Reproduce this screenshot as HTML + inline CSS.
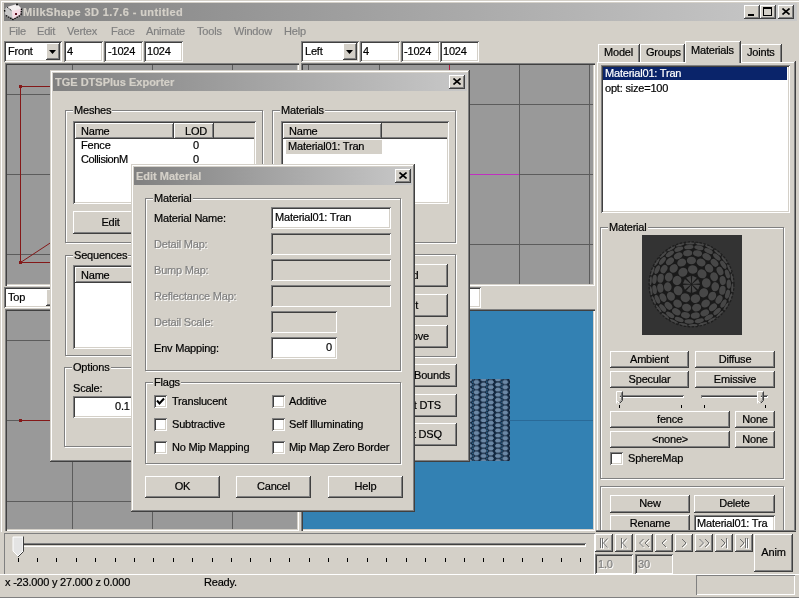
<!DOCTYPE html>
<html><head><meta charset="utf-8">
<style>
*{margin:0;padding:0;box-sizing:border-box}
html,body{width:799px;height:598px;overflow:hidden}
body{position:relative;will-change:transform;background:#D4D0C8;font-family:"Liberation Sans",sans-serif;font-size:11px;color:#000;letter-spacing:-0.2px;-webkit-text-stroke:0.2px}
div,span{position:absolute}
.t{white-space:nowrap;line-height:13px}
.btn{background:#D4D0C8;box-shadow:inset -1px -1px #404040,inset 1px 1px #fff,inset -2px -2px #808080;text-align:center;white-space:nowrap}
.sunk{background:#fff;box-shadow:inset 1px 1px #808080,inset -1px -1px #fff,inset 2px 2px #404040,inset -2px -2px #D4D0C8}
.sunkg{background:#D4D0C8;box-shadow:inset 1px 1px #808080,inset -1px -1px #fff,inset 2px 2px #404040,inset -2px -2px #D4D0C8}
.win{background:#D4D0C8;box-shadow:inset -1px -1px #404040,inset 1px 1px #D4D0C8,inset -2px -2px #808080,inset 2px 2px #fff}
.title{height:18px;background:linear-gradient(to right,#808080,#C8C8C8);color:#D4D0C8;font-weight:bold;font-size:11px;line-height:18px;padding-left:2px;white-space:nowrap;letter-spacing:0}
.grp{border:1px solid #808080;box-shadow:1px 1px #fff,inset 1px 1px #fff}
.grp>span{top:-7px;left:7px;background:#D4D0C8;padding:0 1px;line-height:13px;white-space:nowrap}
.vpo{box-shadow:inset 1px 1px #808080,inset 2px 2px #404040,inset -1px -1px #fff,inset -2px -2px #D4D0C8}
.vp{background:#999999;overflow:hidden}
.gl{background:#5c5c5c}
.dis{color:#808080;text-shadow:1px 1px #fff}
.cb{width:13px;height:13px;background:#fff;box-shadow:inset 1px 1px #808080,inset -1px -1px #fff,inset 2px 2px #404040,inset -2px -2px #D4D0C8}
</style></head><body>

<div style="left:0;top:0;width:799px;height:598px;box-shadow:inset 1px 1px #D4D0C8,inset 2px 2px #fff"></div>
<!-- main title -->
<div class="title" style="left:4px;top:3px;width:793px;padding-left:19px;letter-spacing:0.4px">MilkShape 3D 1.7.6 - untitled</div>
<svg style="position:absolute;left:2px;top:2px" width="22" height="20" viewBox="2 2 22 20">
<path d="M7 7 L17 4 L21.5 8.5 L21 15 L13 19.5 L6 15.5 L4.5 10 Z" fill="#f4f0f0"/>
<path d="M4.5 10 L7 7 L12 11 L13 19.5 L6 15.5 Z" fill="#c8c8c8"/>
<path d="M12 11 L21.5 8.5 L21 15 L13 19.5 Z" fill="#f4dce4"/>
<path d="M6 15.5 L13 19.5 L21 15 M21.5 8.5 L21 15 M4.5 10 L5 12" stroke="#000" stroke-width="1.3" fill="none" stroke-dasharray="1.6 0.8"/>
<path d="M7 7 L12 11" stroke="#202020" stroke-width="1" fill="none" stroke-dasharray="1.2 0.8"/>
<circle cx="17" cy="4.5" r="1" fill="#000"/>
<rect x="15" y="13" width="2" height="2" fill="#601020"/>
</svg>
<div class="btn" style="left:744px;top:5px;width:16px;height:14px"><div style="left:4px;top:9px;width:6px;height:2px;background:#000"></div></div>
<div class="btn" style="left:760px;top:5px;width:16px;height:14px"><div style="left:3px;top:2px;width:9px;height:9px;border:1px solid #000;border-top-width:2px"></div></div>
<div class="btn" style="left:778px;top:5px;width:16px;height:14px"><svg style="position:absolute;left:4px;top:3px" width="8" height="7"><path d="M0.5 0.5 L7.5 6.5 M7.5 0.5 L0.5 6.5" stroke="#000" stroke-width="1.6"/></svg></div>

<!-- menu -->
<div class="t" style="left:9px;top:25px;color:#808080">File</div>
<div class="t" style="left:37px;top:25px;color:#808080">Edit</div>
<div class="t" style="left:67px;top:25px;color:#808080">Vertex</div>
<div class="t" style="left:111px;top:25px;color:#808080">Face</div>
<div class="t" style="left:146px;top:25px;color:#808080">Animate</div>
<div class="t" style="left:197px;top:25px;color:#808080">Tools</div>
<div class="t" style="left:234px;top:25px;color:#808080">Window</div>
<div class="t" style="left:284px;top:25px;color:#808080">Help</div>

<!-- toolbar left -->
<div class="sunk" style="left:4px;top:41px;width:58px;height:21px"><span class="t" style="left:4px;top:4px">Front</span>
<div class="btn" style="left:42px;top:2px;width:14px;height:17px"><svg style="position:absolute;left:3px;top:7px" width="7" height="4"><path d="M0 0H7L3.5 4Z" fill="#000"/></svg></div></div>
<div class="sunk" style="left:64px;top:41px;width:39px;height:21px"><span class="t" style="left:3px;top:4px">4</span></div>
<div class="sunk" style="left:104px;top:41px;width:39px;height:21px"><span class="t" style="left:4px;top:4px">-1024</span></div>
<div class="sunk" style="left:144px;top:41px;width:39px;height:21px"><span class="t" style="left:3px;top:4px">1024</span></div>

<!-- toolbar right -->
<div class="sunk" style="left:301px;top:41px;width:58px;height:21px"><span class="t" style="left:4px;top:4px">Left</span>
<div class="btn" style="left:42px;top:2px;width:14px;height:17px"><svg style="position:absolute;left:3px;top:7px" width="7" height="4"><path d="M0 0H7L3.5 4Z" fill="#000"/></svg></div></div>
<div class="sunk" style="left:360px;top:41px;width:40px;height:21px"><span class="t" style="left:3px;top:4px">4</span></div>
<div class="sunk" style="left:401px;top:41px;width:39px;height:21px"><span class="t" style="left:3px;top:4px">-1024</span></div>
<div class="sunk" style="left:440px;top:41px;width:39px;height:21px"><span class="t" style="left:3px;top:4px">1024</span></div>

<!-- viewports -->
<div class="vpo" style="left:5px;top:63px;width:294px;height:223px"><div class="vp" style="left:2px;top:2px;width:290px;height:219px">
  <div class="gl" style="left:65px;top:0;width:1px;height:219px"></div>
  <div class="gl" style="left:145px;top:0;width:1px;height:219px"></div>
  <div class="gl" style="left:225px;top:0;width:1px;height:219px"></div>
  <div class="gl" style="left:0;top:29px;width:290px;height:1px"></div>
  <div class="gl" style="left:0;top:109px;width:290px;height:1px"></div>
  <div class="gl" style="left:0;top:189px;width:290px;height:1px"></div>
  <div style="left:13px;top:21px;width:1px;height:176px;background:#841818"></div>
  <div style="left:13px;top:21px;width:120px;height:1px;background:#841818"></div>
  <div style="left:13px;top:197px;width:120px;height:1px;background:#841818"></div>
  <svg style="position:absolute;left:0;top:0" width="290" height="219"><line x1="13.5" y1="197.5" x2="133" y2="119" stroke="#841818" stroke-width="1"/></svg>
  <div style="left:12px;top:20px;width:3px;height:3px;background:#841818"></div>
  <div style="left:12px;top:196px;width:3px;height:3px;background:#841818"></div>
</div></div>
<div class="sunk" style="left:4px;top:287px;width:58px;height:21px"><span class="t" style="left:4px;top:4px">Top</span>
<div class="btn" style="left:42px;top:2px;width:14px;height:17px"></div></div>
<div class="vpo" style="left:5px;top:309px;width:294px;height:222px"><div class="vp" style="left:2px;top:2px;width:290px;height:218px">
  <div class="gl" style="left:65px;top:0;width:1px;height:218px"></div>
  <div class="gl" style="left:145px;top:0;width:1px;height:218px"></div>
  <div class="gl" style="left:225px;top:0;width:1px;height:218px"></div>
  <div class="gl" style="left:0;top:29px;width:290px;height:1px"></div>
  <div class="gl" style="left:0;top:109px;width:290px;height:1px"></div>
  <div class="gl" style="left:0;top:190px;width:290px;height:1px"></div>
  <div style="left:13px;top:109px;width:120px;height:1px;background:#841818"></div>
  <div style="left:12px;top:108px;width:3px;height:3px;background:#841818"></div>
</div></div>
<div class="vpo" style="left:301px;top:63px;width:294px;height:223px"><div class="vp" style="left:2px;top:2px;width:290px;height:219px">
  <div class="gl" style="left:5px;top:0;width:1px;height:219px"></div>
  <div class="gl" style="left:76px;top:0;width:1px;height:219px"></div>
  <div class="gl" style="left:216px;top:0;width:1px;height:219px"></div>
  <div class="gl" style="left:286px;top:0;width:1px;height:219px"></div>
  <div class="gl" style="left:0;top:39px;width:290px;height:1px"></div>
  <div class="gl" style="left:0;top:109px;width:290px;height:1px"></div>
  <div class="gl" style="left:0;top:179px;width:290px;height:1px"></div>
  <div style="left:146px;top:0;width:1px;height:109px;background:#b02040"></div>
  <div style="left:146px;top:109px;width:70px;height:1px;background:#c030c0"></div>
</div></div>
<div class="sunk" style="left:301px;top:287px;width:180px;height:21px"></div>
<div class="vpo" style="left:301px;top:309px;width:294px;height:222px"><div style="left:2px;top:2px;width:290px;height:218px;background:#3381B3;overflow:hidden">
  <div style="left:0;top:109px;width:290px;height:1px;background:#2a6a98"></div>
  <svg style="position:absolute;left:140px;top:68px" width="67" height="82">
  <defs><pattern id="hex" width="14.4" height="5.1" patternUnits="userSpaceOnUse" x="1" y="0.5">
  <g fill="#6b88a6" stroke="#0a1a30" stroke-width="1.05">
  <path d="M-0.4 2.55 L1.6 0 L5.6 0 L7.6 2.55 L5.6 5.1 L1.6 5.1 Z"/>
  <path d="M6.8 0 L8.8 -2.55 L12.8 -2.55 L14.8 0 L12.8 2.55 L8.8 2.55 Z"/>
  <path d="M6.8 5.1 L8.8 2.55 L12.8 2.55 L14.8 5.1 L12.8 7.65 L8.8 7.65 Z"/>
  </g></pattern></defs>
  <rect x="0" y="0" width="69" height="83" fill="url(#hex)"/>
  </svg>
</div></div>

<!-- right panel -->
<div class="win" style="left:596px;top:61px;width:200px;height:472px"></div>
<!-- tabs -->
<div style="left:598px;top:44px;width:41px;height:18px;background:#D4D0C8;border-left:1px solid #fff;border-top:1px solid #fff;box-shadow:inset -1px 0 #808080, 1px 0 #404040"><span class="t" style="left:5px;top:1px">Model</span></div>
<div style="left:640px;top:44px;width:44px;height:18px;background:#D4D0C8;border-left:1px solid #fff;border-top:1px solid #fff;box-shadow:inset -1px 0 #808080, 1px 0 #404040"><span class="t" style="left:5px;top:1px">Groups</span></div>
<div style="left:741px;top:44px;width:40px;height:18px;background:#D4D0C8;border-left:1px solid #fff;border-top:1px solid #fff;box-shadow:inset -1px 0 #808080, 1px 0 #404040"><span class="t" style="left:5px;top:1px">Joints</span></div>
<div style="left:685px;top:41px;width:55px;height:22px;background:#D4D0C8;border-left:1px solid #fff;border-top:1px solid #fff;box-shadow:inset -1px 0 #808080, 1px 0 #404040"><span class="t" style="left:5px;top:2px">Materials</span></div>
<!-- listbox -->
<div class="sunk" style="left:601px;top:65px;width:189px;height:148px">
  <div style="left:2px;top:2px;width:184px;height:13px;background:#0A246A"></div>
  <span class="t" style="left:4px;top:2px;color:#fff">Material01: Tran</span>
  <span class="t" style="left:4px;top:17px">opt: size=100</span>
</div>
<!-- material group -->
<div class="grp" style="left:600px;top:227px;width:184px;height:252px"><span>Material</span></div>
<div style="left:642px;top:235px;width:100px;height:100px;background:#333333">
<svg width="100" height="100" style="position:absolute;left:0;top:0">
<circle cx="49.5" cy="49.3" r="42.5" fill="#1a1a1a"/>
<g fill="#474747">
<polygon points="50.2,49.6 58.0,50.1 56.1,54.7"/><polygon points="49.8,50.0 54.9,55.9 50.3,57.8"/><polygon points="49.2,50.0 48.7,57.8 44.1,55.9"/><polygon points="48.8,49.6 42.9,54.7 41.0,50.1"/><polygon points="48.8,49.0 41.0,48.5 42.9,43.9"/><polygon points="49.2,48.6 44.1,42.7 48.7,40.8"/><polygon points="49.8,48.6 50.3,40.8 54.9,42.7"/><polygon points="50.2,49.0 56.1,43.9 58.0,48.5"/><ellipse cx="61.7" cy="57.8" rx="4.35" ry="4.77" transform="rotate(34.8 61.7 57.8)"/><ellipse cx="53.4" cy="63.6" rx="4.35" ry="4.77" transform="rotate(74.8 53.4 63.6)"/><ellipse cx="43.3" cy="62.8" rx="4.35" ry="4.77" transform="rotate(114.8 43.3 62.8)"/><ellipse cx="36.1" cy="55.6" rx="4.35" ry="4.77" transform="rotate(154.8 36.1 55.6)"/><ellipse cx="35.1" cy="45.5" rx="4.35" ry="4.77" transform="rotate(194.8 35.1 45.5)"/><ellipse cx="40.9" cy="37.2" rx="4.35" ry="4.77" transform="rotate(234.8 40.9 37.2)"/><ellipse cx="50.7" cy="34.5" rx="4.35" ry="4.77" transform="rotate(274.8 50.7 34.5)"/><ellipse cx="60.0" cy="38.8" rx="4.35" ry="4.77" transform="rotate(314.8 60.0 38.8)"/><ellipse cx="64.3" cy="48.0" rx="4.35" ry="4.77" transform="rotate(354.8 64.3 48.0)"/><ellipse cx="70.2" cy="61.1" rx="3.84" ry="4.59" transform="rotate(29.8 70.2 61.1)"/><ellipse cx="63.6" cy="68.5" rx="3.84" ry="4.59" transform="rotate(53.8 63.6 68.5)"/><ellipse cx="54.6" cy="72.6" rx="3.84" ry="4.59" transform="rotate(77.8 54.6 72.6)"/><ellipse cx="44.6" cy="72.6" rx="3.84" ry="4.59" transform="rotate(101.8 44.6 72.6)"/><ellipse cx="35.6" cy="68.6" rx="3.84" ry="4.59" transform="rotate(125.8 35.6 68.6)"/><ellipse cx="28.9" cy="61.3" rx="3.84" ry="4.59" transform="rotate(149.8 28.9 61.3)"/><ellipse cx="25.8" cy="51.9" rx="3.84" ry="4.59" transform="rotate(173.8 25.8 51.9)"/><ellipse cx="26.8" cy="42.0" rx="3.84" ry="4.59" transform="rotate(197.8 26.8 42.0)"/><ellipse cx="31.7" cy="33.4" rx="3.84" ry="4.59" transform="rotate(221.8 31.7 33.4)"/><ellipse cx="39.7" cy="27.6" rx="3.84" ry="4.59" transform="rotate(245.8 39.7 27.6)"/><ellipse cx="49.4" cy="25.5" rx="3.84" ry="4.59" transform="rotate(269.8 49.4 25.5)"/><ellipse cx="59.1" cy="27.5" rx="3.84" ry="4.59" transform="rotate(293.8 59.1 27.5)"/><ellipse cx="67.1" cy="33.3" rx="3.84" ry="4.59" transform="rotate(317.8 67.1 33.3)"/><ellipse cx="72.1" cy="41.8" rx="3.84" ry="4.59" transform="rotate(341.8 72.1 41.8)"/><ellipse cx="73.2" cy="51.7" rx="3.84" ry="4.59" transform="rotate(365.8 73.2 51.7)"/><ellipse cx="80.4" cy="55.3" rx="3.12" ry="4.54" transform="rotate(11.0 80.4 55.3)"/><ellipse cx="77.0" cy="64.5" rx="3.12" ry="4.54" transform="rotate(29.0 77.0 64.5)"/><ellipse cx="71.0" cy="72.3" rx="3.12" ry="4.54" transform="rotate(47.0 71.0 72.3)"/><ellipse cx="62.8" cy="77.8" rx="3.12" ry="4.54" transform="rotate(65.0 62.8 77.8)"/><ellipse cx="53.3" cy="80.5" rx="3.12" ry="4.54" transform="rotate(83.0 53.3 80.5)"/><ellipse cx="43.5" cy="80.2" rx="3.12" ry="4.54" transform="rotate(101.0 43.5 80.2)"/><ellipse cx="34.3" cy="76.8" rx="3.12" ry="4.54" transform="rotate(119.0 34.3 76.8)"/><ellipse cx="26.5" cy="70.8" rx="3.12" ry="4.54" transform="rotate(137.0 26.5 70.8)"/><ellipse cx="21.0" cy="62.6" rx="3.12" ry="4.54" transform="rotate(155.0 21.0 62.6)"/><ellipse cx="18.3" cy="53.1" rx="3.12" ry="4.54" transform="rotate(173.0 18.3 53.1)"/><ellipse cx="18.6" cy="43.3" rx="3.12" ry="4.54" transform="rotate(191.0 18.6 43.3)"/><ellipse cx="22.0" cy="34.1" rx="3.12" ry="4.54" transform="rotate(209.0 22.0 34.1)"/><ellipse cx="28.0" cy="26.3" rx="3.12" ry="4.54" transform="rotate(227.0 28.0 26.3)"/><ellipse cx="36.2" cy="20.8" rx="3.12" ry="4.54" transform="rotate(245.0 36.2 20.8)"/><ellipse cx="45.7" cy="18.1" rx="3.12" ry="4.54" transform="rotate(263.0 45.7 18.1)"/><ellipse cx="55.5" cy="18.4" rx="3.12" ry="4.54" transform="rotate(281.0 55.5 18.4)"/><ellipse cx="64.7" cy="21.8" rx="3.12" ry="4.54" transform="rotate(299.0 64.7 21.8)"/><ellipse cx="72.5" cy="27.8" rx="3.12" ry="4.54" transform="rotate(317.0 72.5 27.8)"/><ellipse cx="78.0" cy="36.0" rx="3.12" ry="4.54" transform="rotate(335.0 78.0 36.0)"/><ellipse cx="80.7" cy="45.5" rx="3.12" ry="4.54" transform="rotate(353.0 80.7 45.5)"/><ellipse cx="85.5" cy="59.2" rx="2.22" ry="4.69" transform="rotate(15.3 85.5 59.2)"/><ellipse cx="81.5" cy="68.5" rx="2.22" ry="4.69" transform="rotate(31.0 81.5 68.5)"/><ellipse cx="75.1" cy="76.4" rx="2.22" ry="4.69" transform="rotate(46.6 75.1 76.4)"/><ellipse cx="66.8" cy="82.3" rx="2.22" ry="4.69" transform="rotate(62.3 66.8 82.3)"/><ellipse cx="57.3" cy="85.8" rx="2.22" ry="4.69" transform="rotate(77.9 57.3 85.8)"/><ellipse cx="47.2" cy="86.5" rx="2.22" ry="4.69" transform="rotate(93.6 47.2 86.5)"/><ellipse cx="37.2" cy="84.5" rx="2.22" ry="4.69" transform="rotate(109.3 37.2 84.5)"/><ellipse cx="28.2" cy="79.9" rx="2.22" ry="4.69" transform="rotate(124.9 28.2 79.9)"/><ellipse cx="20.7" cy="73.0" rx="2.22" ry="4.69" transform="rotate(140.6 20.7 73.0)"/><ellipse cx="15.4" cy="64.3" rx="2.22" ry="4.69" transform="rotate(156.2 15.4 64.3)"/><ellipse cx="12.6" cy="54.6" rx="2.22" ry="4.69" transform="rotate(171.9 12.6 54.6)"/><ellipse cx="12.5" cy="44.4" rx="2.22" ry="4.69" transform="rotate(187.5 12.5 44.4)"/><ellipse cx="15.2" cy="34.6" rx="2.22" ry="4.69" transform="rotate(203.2 15.2 34.6)"/><ellipse cx="20.4" cy="25.9" rx="2.22" ry="4.69" transform="rotate(218.8 20.4 25.9)"/><ellipse cx="27.8" cy="18.9" rx="2.22" ry="4.69" transform="rotate(234.5 27.8 18.9)"/><ellipse cx="36.8" cy="14.2" rx="2.22" ry="4.69" transform="rotate(250.1 36.8 14.2)"/><ellipse cx="46.8" cy="12.1" rx="2.22" ry="4.69" transform="rotate(265.8 46.8 12.1)"/><ellipse cx="56.9" cy="12.7" rx="2.22" ry="4.69" transform="rotate(281.4 56.9 12.7)"/><ellipse cx="66.5" cy="16.1" rx="2.22" ry="4.69" transform="rotate(297.1 66.5 16.1)"/><ellipse cx="74.8" cy="21.9" rx="2.22" ry="4.69" transform="rotate(312.7 74.8 21.9)"/><ellipse cx="81.3" cy="29.7" rx="2.22" ry="4.69" transform="rotate(328.4 81.3 29.7)"/><ellipse cx="85.4" cy="39.0" rx="2.22" ry="4.69" transform="rotate(344.0 85.4 39.0)"/><ellipse cx="86.8" cy="49.1" rx="2.22" ry="4.69" transform="rotate(359.7 86.8 49.1)"/><ellipse cx="88.4" cy="62.5" rx="1.20" ry="4.56" transform="rotate(18.7 88.4 62.5)"/><ellipse cx="84.1" cy="71.4" rx="1.20" ry="4.56" transform="rotate(32.5 84.1 71.4)"/><ellipse cx="77.8" cy="79.0" rx="1.20" ry="4.56" transform="rotate(46.4 77.8 79.0)"/><ellipse cx="69.9" cy="84.9" rx="1.20" ry="4.56" transform="rotate(60.2 69.9 84.9)"/><ellipse cx="60.8" cy="88.8" rx="1.20" ry="4.56" transform="rotate(74.1 60.8 88.8)"/><ellipse cx="51.0" cy="90.3" rx="1.20" ry="4.56" transform="rotate(87.9 51.0 90.3)"/><ellipse cx="41.1" cy="89.5" rx="1.20" ry="4.56" transform="rotate(101.8 41.1 89.5)"/><ellipse cx="31.8" cy="86.3" rx="1.20" ry="4.56" transform="rotate(115.6 31.8 86.3)"/><ellipse cx="23.4" cy="81.0" rx="1.20" ry="4.56" transform="rotate(129.5 23.4 81.0)"/><ellipse cx="16.6" cy="73.8" rx="1.20" ry="4.56" transform="rotate(143.3 16.6 73.8)"/><ellipse cx="11.7" cy="65.2" rx="1.20" ry="4.56" transform="rotate(157.2 11.7 65.2)"/><ellipse cx="9.0" cy="55.7" rx="1.20" ry="4.56" transform="rotate(171.0 9.0 55.7)"/><ellipse cx="8.6" cy="45.8" rx="1.20" ry="4.56" transform="rotate(184.8 8.6 45.8)"/><ellipse cx="10.6" cy="36.1" rx="1.20" ry="4.56" transform="rotate(198.7 10.6 36.1)"/><ellipse cx="14.9" cy="27.2" rx="1.20" ry="4.56" transform="rotate(212.5 14.9 27.2)"/><ellipse cx="21.2" cy="19.6" rx="1.20" ry="4.56" transform="rotate(226.4 21.2 19.6)"/><ellipse cx="29.1" cy="13.7" rx="1.20" ry="4.56" transform="rotate(240.2 29.1 13.7)"/><ellipse cx="38.2" cy="9.8" rx="1.20" ry="4.56" transform="rotate(254.1 38.2 9.8)"/><ellipse cx="48.0" cy="8.3" rx="1.20" ry="4.56" transform="rotate(267.9 48.0 8.3)"/><ellipse cx="57.9" cy="9.1" rx="1.20" ry="4.56" transform="rotate(281.8 57.9 9.1)"/><ellipse cx="67.2" cy="12.3" rx="1.20" ry="4.56" transform="rotate(295.6 67.2 12.3)"/><ellipse cx="75.6" cy="17.6" rx="1.20" ry="4.56" transform="rotate(309.5 75.6 17.6)"/><ellipse cx="82.4" cy="24.8" rx="1.20" ry="4.56" transform="rotate(323.3 82.4 24.8)"/><ellipse cx="87.3" cy="33.4" rx="1.20" ry="4.56" transform="rotate(337.2 87.3 33.4)"/><ellipse cx="90.0" cy="42.9" rx="1.20" ry="4.56" transform="rotate(351.0 90.0 42.9)"/><ellipse cx="90.4" cy="52.8" rx="1.20" ry="4.56" transform="rotate(364.8 90.4 52.8)"/><ellipse cx="91.3" cy="56.6" rx="0.20" ry="4.71" transform="rotate(10.0 91.3 56.6)"/><ellipse cx="88.3" cy="66.4" rx="0.20" ry="4.71" transform="rotate(23.8 88.3 66.4)"/><ellipse cx="83.1" cy="75.2" rx="0.20" ry="4.71" transform="rotate(37.7 83.1 75.2)"/><ellipse cx="75.9" cy="82.5" rx="0.20" ry="4.71" transform="rotate(51.5 75.9 82.5)"/><ellipse cx="67.2" cy="87.8" rx="0.20" ry="4.71" transform="rotate(65.4 67.2 87.8)"/><ellipse cx="57.4" cy="90.9" rx="0.20" ry="4.71" transform="rotate(79.2 57.4 90.9)"/><ellipse cx="47.2" cy="91.6" rx="0.20" ry="4.71" transform="rotate(93.0 47.2 91.6)"/><ellipse cx="37.2" cy="89.9" rx="0.20" ry="4.71" transform="rotate(106.9 37.2 89.9)"/><ellipse cx="27.8" cy="85.7" rx="0.20" ry="4.71" transform="rotate(120.7 27.8 85.7)"/><ellipse cx="19.7" cy="79.5" rx="0.20" ry="4.71" transform="rotate(134.6 19.7 79.5)"/><ellipse cx="13.4" cy="71.5" rx="0.20" ry="4.71" transform="rotate(148.4 13.4 71.5)"/><ellipse cx="9.1" cy="62.2" rx="0.20" ry="4.71" transform="rotate(162.3 9.1 62.2)"/><ellipse cx="7.2" cy="52.2" rx="0.20" ry="4.71" transform="rotate(176.1 7.2 52.2)"/><ellipse cx="7.7" cy="42.0" rx="0.20" ry="4.71" transform="rotate(190.0 7.7 42.0)"/><ellipse cx="10.7" cy="32.2" rx="0.20" ry="4.71" transform="rotate(203.8 10.7 32.2)"/><ellipse cx="15.9" cy="23.4" rx="0.20" ry="4.71" transform="rotate(217.7 15.9 23.4)"/><ellipse cx="23.1" cy="16.1" rx="0.20" ry="4.71" transform="rotate(231.5 23.1 16.1)"/><ellipse cx="31.8" cy="10.8" rx="0.20" ry="4.71" transform="rotate(245.4 31.8 10.8)"/><ellipse cx="41.6" cy="7.7" rx="0.20" ry="4.71" transform="rotate(259.2 41.6 7.7)"/><ellipse cx="51.8" cy="7.0" rx="0.20" ry="4.71" transform="rotate(273.0 51.8 7.0)"/><ellipse cx="61.8" cy="8.7" rx="0.20" ry="4.71" transform="rotate(286.9 61.8 8.7)"/><ellipse cx="71.2" cy="12.9" rx="0.20" ry="4.71" transform="rotate(300.7 71.2 12.9)"/><ellipse cx="79.3" cy="19.1" rx="0.20" ry="4.71" transform="rotate(314.6 79.3 19.1)"/><ellipse cx="85.6" cy="27.1" rx="0.20" ry="4.71" transform="rotate(328.4 85.6 27.1)"/><ellipse cx="89.9" cy="36.4" rx="0.20" ry="4.71" transform="rotate(342.3 89.9 36.4)"/><ellipse cx="91.8" cy="46.4" rx="0.20" ry="4.71" transform="rotate(356.1 91.8 46.4)"/>
</g>
<circle cx="49.5" cy="49.3" r="42.5" fill="none" stroke="#1e1e1e" stroke-width="1.2" stroke-dasharray="2.5 1.5"/>
</svg></div>
<div class="btn" style="left:610px;top:351px;width:79px;height:17px;line-height:16px">Ambient</div>
<div class="btn" style="left:695px;top:351px;width:80px;height:17px;line-height:16px">Diffuse</div>
<div class="btn" style="left:610px;top:371px;width:79px;height:17px;line-height:16px">Specular</div>
<div class="btn" style="left:695px;top:371px;width:80px;height:17px;line-height:16px">Emissive</div>
<!-- sliders -->
<div style="left:617px;top:395px;width:67px;height:3px;box-shadow:inset 1px 1px #808080,inset -1px -1px #fff"></div>
<div style="left:618px;top:396px;width:65px;height:1px;background:#404040"></div>
<svg style="position:absolute;left:616px;top:391px" width="8" height="14"><path d="M0.5 12.5V0.5H6.5" stroke="#fff" fill="#D4D0C8"/><path d="M6.5 0.5V9.5L3.5 12.5" stroke="#404040" fill="none"/><path d="M5.5 1.5V9L3 11.5" stroke="#808080" fill="none"/><path d="M0.5 9.5L3.5 12.5" stroke="#fff" fill="none"/></svg>
<div style="left:619px;top:405px;width:1px;height:3px;background:#000"></div>
<div style="left:681px;top:405px;width:1px;height:3px;background:#000"></div>
<div style="left:701px;top:395px;width:67px;height:3px;box-shadow:inset 1px 1px #808080,inset -1px -1px #fff"></div>
<div style="left:702px;top:396px;width:65px;height:1px;background:#404040"></div>
<svg style="position:absolute;left:757px;top:391px" width="8" height="14"><path d="M0.5 12.5V0.5H6.5" stroke="#fff" fill="#D4D0C8"/><path d="M6.5 0.5V9.5L3.5 12.5" stroke="#404040" fill="none"/><path d="M5.5 1.5V9L3 11.5" stroke="#808080" fill="none"/><path d="M0.5 9.5L3.5 12.5" stroke="#fff" fill="none"/></svg>
<div style="left:704px;top:405px;width:1px;height:3px;background:#000"></div>
<div style="left:765px;top:405px;width:1px;height:3px;background:#000"></div>
<div class="btn" style="left:610px;top:411px;width:120px;height:17px;line-height:16px">fence</div>
<div class="btn" style="left:735px;top:411px;width:40px;height:17px;line-height:16px">None</div>
<div class="btn" style="left:610px;top:431px;width:120px;height:17px;line-height:16px">&lt;none&gt;</div>
<div class="btn" style="left:735px;top:431px;width:40px;height:17px;line-height:16px">None</div>
<div class="cb" style="left:610px;top:452px"></div>
<span class="t" style="left:628px;top:452px">SphereMap</span>
<!-- new/delete group -->
<div class="grp" style="left:600px;top:486px;width:184px;height:50px"></div>
<div class="btn" style="left:610px;top:495px;width:80px;height:18px;line-height:17px">New</div>
<div class="btn" style="left:694px;top:495px;width:81px;height:18px;line-height:17px">Delete</div>
<div class="btn" style="left:610px;top:515px;width:80px;height:18px;line-height:17px">Rename</div>
<div class="sunk" style="left:694px;top:515px;width:81px;height:18px"><span class="t" style="left:3px;top:2px">Material01: Tra</span></div>

<!-- bottom timeline panel -->
<div style="left:596px;top:530px;width:200px;height:45px;background:#D4D0C8;box-shadow:inset 0 1px #808080,inset 0 2px #404040"></div>
<div style="left:796px;top:530px;width:3px;height:45px;background:#D4D0C8"></div>
<div style="left:0;top:532px;width:596px;height:43px;background:#D4D0C8"></div>
<div style="left:4px;top:533px;width:591px;height:42px;box-shadow:inset 1px 1px #808080,inset -1px -1px #fff"></div>
<!-- slider track -->
<div style="left:14px;top:543px;width:572px;height:4px;box-shadow:inset 1px 1px #808080,inset -1px -1px #fff,inset 2px 2px #404040"></div>
<svg style="position:absolute;left:12px;top:536px" width="13" height="22"><path d="M1 1 H11 V15 L6 20 L1 15 Z" fill="#e4e4e4" stroke="#fff"/><path d="M11.5 0.5 V15.5 L6 21" fill="none" stroke="#404040"/></svg>
<svg style="position:absolute;left:0;top:558px" width="599" height="5">
<g stroke="#000" stroke-width="1"><line x1="18.5" y1="0" x2="18.5" y2="4"/><line x1="37.5" y1="0" x2="37.5" y2="4"/><line x1="56.5" y1="0" x2="56.5" y2="4"/><line x1="76.5" y1="0" x2="76.5" y2="4"/><line x1="95.5" y1="0" x2="95.5" y2="4"/><line x1="115.5" y1="0" x2="115.5" y2="4"/><line x1="134.5" y1="0" x2="134.5" y2="4"/><line x1="153.5" y1="0" x2="153.5" y2="4"/><line x1="173.5" y1="0" x2="173.5" y2="4"/><line x1="192.5" y1="0" x2="192.5" y2="4"/><line x1="212.5" y1="0" x2="212.5" y2="4"/><line x1="231.5" y1="0" x2="231.5" y2="4"/><line x1="250.5" y1="0" x2="250.5" y2="4"/><line x1="270.5" y1="0" x2="270.5" y2="4"/><line x1="289.5" y1="0" x2="289.5" y2="4"/><line x1="309.5" y1="0" x2="309.5" y2="4"/><line x1="328.5" y1="0" x2="328.5" y2="4"/><line x1="347.5" y1="0" x2="347.5" y2="4"/><line x1="367.5" y1="0" x2="367.5" y2="4"/><line x1="386.5" y1="0" x2="386.5" y2="4"/><line x1="406.5" y1="0" x2="406.5" y2="4"/><line x1="425.5" y1="0" x2="425.5" y2="4"/><line x1="445.5" y1="0" x2="445.5" y2="4"/><line x1="464.5" y1="0" x2="464.5" y2="4"/><line x1="483.5" y1="0" x2="483.5" y2="4"/><line x1="503.5" y1="0" x2="503.5" y2="4"/><line x1="522.5" y1="0" x2="522.5" y2="4"/><line x1="542.5" y1="0" x2="542.5" y2="4"/><line x1="561.5" y1="0" x2="561.5" y2="4"/><line x1="580.5" y1="0" x2="580.5" y2="4"/></g></svg>
<!-- nav buttons -->
<div class="btn" style="left:595px;top:534px;width:18px;height:18px"><svg style="position:absolute;left:0;top:0" width="18" height="18"><path d="M5.5 4V14M7.5 4V14M12.5 4.5L8.5 9L12.5 13.5" transform="translate(1,1)" stroke="#fff" fill="none"/><path d="M5.5 4V14M7.5 4V14M12.5 4.5L8.5 9L12.5 13.5" stroke="#707070" fill="none"/></svg></div>
<div class="btn" style="left:615px;top:534px;width:18px;height:18px"><svg style="position:absolute;left:0;top:0" width="18" height="18"><path d="M6.5 4V14M11.5 4.5L7.5 9L11.5 13.5" transform="translate(1,1)" stroke="#fff" fill="none"/><path d="M6.5 4V14M11.5 4.5L7.5 9L11.5 13.5" stroke="#707070" fill="none"/></svg></div>
<div class="btn" style="left:635px;top:534px;width:18px;height:18px"><svg style="position:absolute;left:0;top:0" width="18" height="18"><path d="M8.5 5L4.5 9L8.5 13M14 5L10 9L14 13" transform="translate(1,1)" stroke="#fff" fill="none"/><path d="M8.5 5L4.5 9L8.5 13M14 5L10 9L14 13" stroke="#707070" fill="none"/></svg></div>
<div class="btn" style="left:655px;top:534px;width:18px;height:18px"><svg style="position:absolute;left:0;top:0" width="18" height="18"><path d="M11 5L7 9L11 13" transform="translate(1,1)" stroke="#fff" fill="none"/><path d="M11 5L7 9L11 13" stroke="#707070" fill="none"/></svg></div>
<div class="btn" style="left:675px;top:534px;width:18px;height:18px"><svg style="position:absolute;left:0;top:0" width="18" height="18"><path d="M7 5L11 9L7 13" transform="translate(1,1)" stroke="#fff" fill="none"/><path d="M7 5L11 9L7 13" stroke="#707070" fill="none"/></svg></div>
<div class="btn" style="left:695px;top:534px;width:18px;height:18px"><svg style="position:absolute;left:0;top:0" width="18" height="18"><path d="M4.5 5L8.5 9L4.5 13M10 5L14 9L10 13" transform="translate(1,1)" stroke="#fff" fill="none"/><path d="M4.5 5L8.5 9L4.5 13M10 5L14 9L10 13" stroke="#707070" fill="none"/></svg></div>
<div class="btn" style="left:715px;top:534px;width:18px;height:18px"><svg style="position:absolute;left:0;top:0" width="18" height="18"><path d="M6 5L10 9L6 13M11.5 4V14" transform="translate(1,1)" stroke="#fff" fill="none"/><path d="M6 5L10 9L6 13M11.5 4V14" stroke="#707070" fill="none"/></svg></div>
<div class="btn" style="left:735px;top:534px;width:18px;height:18px"><svg style="position:absolute;left:0;top:0" width="18" height="18"><path d="M5 5L9 9L5 13M10.5 4V14M12.5 4V14" transform="translate(1,1)" stroke="#fff" fill="none"/><path d="M5 5L9 9L5 13M10.5 4V14M12.5 4V14" stroke="#707070" fill="none"/></svg></div>
<div class="sunkg" style="left:595px;top:554px;width:38px;height:20px"><span class="t dis" style="left:3px;top:4px">1.0</span></div>
<div class="sunkg" style="left:635px;top:554px;width:38px;height:20px"><span class="t dis" style="left:3px;top:4px">30</span></div>
<div class="btn" style="left:754px;top:534px;width:39px;height:38px;line-height:37px">Anim</div>

<!-- status bar -->
<div style="left:0;top:574px;width:799px;height:24px;border-top:1px solid #fff;background:#D4D0C8"></div>
<span class="t" style="left:5px;top:576px">x -23.000 y 27.000 z 0.000</span>
<span class="t" style="left:204px;top:576px">Ready.</span>
<div style="left:696px;top:575px;width:99px;height:20px;box-shadow:inset 1px 1px #808080,inset -1px -1px #fff"></div>
<div style="left:0;top:597px;width:799px;height:1px;background:#808080"></div>

<!-- ===== Exporter dialog ===== -->
<div class="win" style="left:50px;top:70px;width:420px;height:392px">
  <div class="title" style="left:3px;top:3px;width:414px">TGE DTSPlus Exporter</div>
  <div class="btn" style="left:399px;top:5px;width:16px;height:14px"><svg style="position:absolute;left:4px;top:3px" width="8" height="7"><path d="M0.5 0.5 L7.5 6.5 M7.5 0.5 L0.5 6.5" stroke="#000" stroke-width="1.6"/></svg></div>
  <!-- Meshes -->
  <div class="grp" style="left:15px;top:40px;width:198px;height:133px"><span>Meshes</span></div>
  <div class="sunk" style="left:23px;top:51px;width:183px;height:83px;overflow:hidden">
    <div class="btn" style="left:2px;top:2px;width:99px;height:16px;text-align:left"><span class="t" style="left:6px;top:2px">Name</span></div>
    <div class="btn" style="left:101px;top:2px;width:40px;height:16px"><span class="t" style="left:11px;top:2px">LOD</span></div>
    <div style="left:141px;top:2px;width:40px;height:16px;background:#D4D0C8;box-shadow:inset 0 -1px #404040,inset 0 -2px #808080"></div>
    <span class="t" style="left:8px;top:18px">Fence</span><span class="t" style="left:120px;top:18px">0</span>
    <span class="t" style="left:8px;top:32px;letter-spacing:-0.4px">CollisionM</span><span class="t" style="left:120px;top:32px">0</span>
  </div>
  <div class="btn" style="left:23px;top:141px;width:75px;height:23px;line-height:22px">Edit</div>
  <!-- Materials -->
  <div class="grp" style="left:222px;top:40px;width:184px;height:133px"><span>Materials</span></div>
  <div class="sunk" style="left:231px;top:51px;width:168px;height:83px;overflow:hidden">
    <div class="btn" style="left:2px;top:2px;width:99px;height:16px"><span class="t" style="left:6px;top:2px">Name</span></div>
    <div style="left:101px;top:2px;width:65px;height:16px;background:#D4D0C8;box-shadow:inset 0 -1px #404040,inset 0 -2px #808080"></div>
    <div style="left:5px;top:19px;width:96px;height:14px;background:#D4D0C8"></div>
    <span class="t" style="left:7px;top:19px">Material01: Tran</span>
  </div>
  <!-- Sequences -->
  <div class="grp" style="left:15px;top:185px;width:198px;height:101px"><span>Sequences</span></div>
  <div class="sunk" style="left:23px;top:195px;width:183px;height:84px;overflow:hidden">
    <div class="btn" style="left:2px;top:2px;width:99px;height:16px"><span class="t" style="left:6px;top:2px">Name</span></div>
    <div style="left:101px;top:2px;width:80px;height:16px;background:#D4D0C8;box-shadow:inset 0 -1px #404040,inset 0 -2px #808080"></div>
  </div>
  <div class="grp" style="left:222px;top:184px;width:184px;height:103px"></div>
  <div class="btn" style="left:320px;top:194px;width:78px;height:23px;line-height:22px">Add</div>
  <div class="btn" style="left:320px;top:224px;width:78px;height:23px;line-height:22px">Edit</div>
  <div class="btn" style="left:320px;top:255px;width:78px;height:23px;line-height:22px">Remove</div>
  <!-- Options -->
  <div class="grp" style="left:14px;top:297px;width:199px;height:80px"><span>Options</span></div>
  <span class="t" style="left:23px;top:312px">Scale:</span>
  <div class="sunk" style="left:23px;top:326px;width:80px;height:22px"><span class="t" style="left:42px;top:4px">0.1</span></div>
  <div class="btn" style="left:320px;top:294px;width:87px;height:23px;line-height:22px">Update Bounds</div>
  <div class="btn" style="left:320px;top:324px;width:87px;height:23px;line-height:22px">Export DTS</div>
  <div class="btn" style="left:320px;top:353px;width:87px;height:23px;line-height:22px">Export DSQ</div>
</div>

<!-- ===== Edit Material dialog ===== -->
<div class="win" style="left:131px;top:164px;width:284px;height:348px">
  <div class="title" style="left:3px;top:3px;width:278px">Edit Material</div>
  <div class="btn" style="left:264px;top:5px;width:16px;height:14px"><svg style="position:absolute;left:4px;top:3px" width="8" height="7"><path d="M0.5 0.5 L7.5 6.5 M7.5 0.5 L0.5 6.5" stroke="#000" stroke-width="1.6"/></svg></div>
  <div class="grp" style="left:14px;top:34px;width:256px;height:173px"><span>Material</span></div>
  <span class="t" style="left:23px;top:48px">Material Name:</span>
  <span class="t dis" style="left:23px;top:74px">Detail Map:</span>
  <span class="t dis" style="left:23px;top:100px">Bump Map:</span>
  <span class="t dis" style="left:23px;top:126px">Reflectance Map:</span>
  <span class="t dis" style="left:23px;top:152px">Detail Scale:</span>
  <span class="t" style="left:23px;top:178px">Env Mapping:</span>
  <div class="sunk" style="left:140px;top:43px;width:120px;height:22px"><span class="t" style="left:4px;top:4px">Material01: Tran</span></div>
  <div class="sunkg" style="left:140px;top:69px;width:120px;height:22px"></div>
  <div class="sunkg" style="left:140px;top:95px;width:120px;height:22px"></div>
  <div class="sunkg" style="left:140px;top:121px;width:120px;height:22px"></div>
  <div class="sunkg" style="left:140px;top:147px;width:66px;height:22px"></div>
  <div class="sunk" style="left:140px;top:173px;width:66px;height:22px"><span class="t" style="right:5px;top:4px">0</span></div>
  <div class="grp" style="left:14px;top:218px;width:256px;height:82px"><span>Flags</span></div>
  <div class="cb" style="left:23px;top:231px"><svg style="position:absolute;left:2px;top:2px" width="9" height="9"><path d="M1 3.5 L3.5 6.5 L8 1.5" stroke="#000" stroke-width="2" fill="none"/></svg></div>
  <span class="t" style="left:41px;top:231px">Translucent</span>
  <div class="cb" style="left:23px;top:254px"></div><span class="t" style="left:41px;top:254px">Subtractive</span>
  <div class="cb" style="left:23px;top:277px"></div><span class="t" style="left:41px;top:277px">No Mip Mapping</span>
  <div class="cb" style="left:141px;top:231px"></div><span class="t" style="left:158px;top:231px">Additive</span>
  <div class="cb" style="left:141px;top:254px"></div><span class="t" style="left:158px;top:254px">Self Illuminating</span>
  <div class="cb" style="left:141px;top:277px"></div><span class="t" style="left:158px;top:277px">Mip Map Zero Border</span>
  <div class="btn" style="left:14px;top:312px;width:75px;height:22px;line-height:21px">OK</div>
  <div class="btn" style="left:105px;top:312px;width:75px;height:22px;line-height:21px">Cancel</div>
  <div class="btn" style="left:197px;top:312px;width:75px;height:22px;line-height:21px">Help</div>
</div>
</body></html>
